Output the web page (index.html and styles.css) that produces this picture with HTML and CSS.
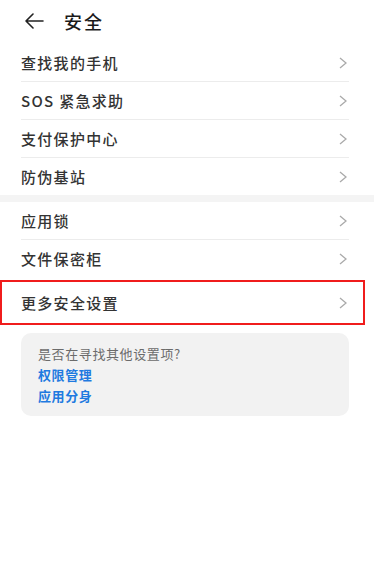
FILE: index.html
```html
<!DOCTYPE html>
<html lang="zh">
<head>
<meta charset="utf-8">
<link rel="stylesheet" href="styles.css">
</head>
<body>
<div class="page">
  <div class="header">
    <svg class="back" width="20" height="16" viewBox="0 0 20 16"><path d="M9 1 L2 8 L9 15 M2 8 H19" fill="none" stroke="#222" stroke-width="1.6" stroke-linecap="round" stroke-linejoin="round"/></svg>
    <span class="title">安全</span>
  </div>
  <div class="group">
    <div class="row"><span class="label">查找我的手机</span><svg class="chev" width="8" height="12" viewBox="0 0 8 12"><path d="M1 1 L7 6 L1 11" fill="none" stroke="#aaa" stroke-width="1.3"/></svg></div>
    <div class="row"><span class="label">SOS 紧急求助</span><svg class="chev" width="8" height="12" viewBox="0 0 8 12"><path d="M1 1 L7 6 L1 11" fill="none" stroke="#aaa" stroke-width="1.3"/></svg></div>
    <div class="row"><span class="label">支付保护中心</span><svg class="chev" width="8" height="12" viewBox="0 0 8 12"><path d="M1 1 L7 6 L1 11" fill="none" stroke="#aaa" stroke-width="1.3"/></svg></div>
    <div class="row last"><span class="label">防伪基站</span><svg class="chev" width="8" height="12" viewBox="0 0 8 12"><path d="M1 1 L7 6 L1 11" fill="none" stroke="#aaa" stroke-width="1.3"/></svg></div>
  </div>
  <div class="band"></div>
  <div class="group">
    <div class="row"><span class="label">应用锁</span><svg class="chev" width="8" height="12" viewBox="0 0 8 12"><path d="M1 1 L7 6 L1 11" fill="none" stroke="#aaa" stroke-width="1.3"/></svg></div>
    <div class="row last"><span class="label">文件保密柜</span><svg class="chev" width="8" height="12" viewBox="0 0 8 12"><path d="M1 1 L7 6 L1 11" fill="none" stroke="#aaa" stroke-width="1.3"/></svg></div>
  </div>
  <div class="row highlight"><span class="label">更多安全设置</span><svg class="chev" width="8" height="12" viewBox="0 0 8 12"><path d="M1 1 L7 6 L1 11" fill="none" stroke="#aaa" stroke-width="1.3"/></svg></div>
  <div class="card">
    <div class="hint">是否在寻找其他设置项?</div>
    <div class="link">权限管理</div>
    <div class="link">应用分身</div>
  </div>
</div>
</body>
</html>
```
FILE: styles.css
```css
html, body {
  margin: 0;
  padding: 0;
  background: #fff;
}
body {
  font-family: "Noto Sans CJK SC", "Noto Sans", sans-serif;
  color: #2a2a2a;
}
.page {
  width: 374px;
}
.header {
  height: 44px;
  display: flex;
  align-items: center;
  padding-left: 24px;
  box-sizing: border-box;
}
.back {
  display: block;
  margin-top: -2px;
}
.title {
  margin-left: 20px;
  font-size: 18px;
  font-weight: 500;
  letter-spacing: 2px;
  line-height: 1;
  margin-top: -3px;
  color: #1a1a1a;
}
.group {
  padding: 0 25px 0 21px;
}
.row {
  height: 38px;
  box-sizing: border-box;
  border-bottom: 1px solid #ececec;
  display: flex;
  align-items: center;
  justify-content: space-between;
}
.row.last {
  border-bottom: none;
  height: 37px;
}
.label {
  font-size: 15px;
  font-weight: 500;
  letter-spacing: 1.3px;
  line-height: 1;
  color: #333;
  margin-top: -1px;
}
.chev {
  display: block;
  margin-right: 2px;
}
.band {
  height: 7px;
  background: #f4f4f4;
}
.row.highlight {
  margin-top: 3px;
  width: 365px;
  height: 45px;
  border: 2px solid #f01c1c;
  padding: 0 14px 0 19px;
}
.card {
  margin: 8px 25px 0 21px;
  height: 83px;
  background: #f2f2f2;
  border-radius: 10px;
  padding: 13px 17px 0 17px;
  box-sizing: border-box;
  display: flex;
  flex-direction: column;
  gap: 6px;
}
.hint {
  font-size: 13px;
  line-height: 15px;
  color: #6b6b6b;
  letter-spacing: 0.6px;
}
.link {
  font-size: 13px;
  line-height: 15px;
  color: #1f7ae0;
  font-weight: 700;
  letter-spacing: 0.6px;
}
```
